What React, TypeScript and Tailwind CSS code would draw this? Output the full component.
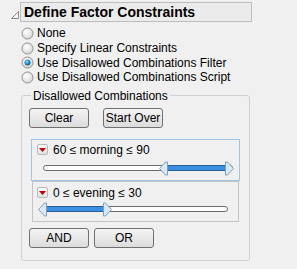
const font = { fontFamily: '"Liberation Sans", Arial, sans-serif' };

const Radio = ({ checked, label }: { checked?: boolean; label: string }) => (
  <div className="flex items-center h-[14.7px]">
    <svg width="13" height="13" viewBox="0 0 13 13" className="mr-[3px]">
      <defs>
        <radialGradient id={checked ? "rgOn" : "rgOff"} cx="40%" cy="35%" r="70%">
          <stop offset="0%" stopColor="#ffffff" />
          <stop offset="100%" stopColor="#d6d6d6" />
        </radialGradient>
        <radialGradient id="dot" cx="40%" cy="35%" r="65%">
          <stop offset="0%" stopColor="#8fd8f8" />
          <stop offset="60%" stopColor="#1f8ed0" />
          <stop offset="100%" stopColor="#12507e" />
        </radialGradient>
      </defs>
      <circle cx="6.5" cy="6.5" r="5.5" fill={`url(#${checked ? "rgOn" : "rgOff"})`} stroke="#8e8f8f" strokeWidth="1" />
      {checked && <circle cx="6.5" cy="6.5" r="3" fill="url(#dot)" />}
    </svg>
    <span className="text-[12px] text-black">{label}</span>
  </div>
);

const Btn = ({ label, w = "w-[60px]" }: { label: string; w?: string }) => (
  <button
    className={`${w} h-[20px] rounded-[3px] border border-[#707070] bg-gradient-to-b from-[#f4f4f4] to-[#dcdcdc] text-[12px] text-black`}
  >
    {label}
  </button>
);

const RedMenu = () => (
  <div className="w-[11px] h-[11px] rounded-[2px] border border-[#b8b8b8] bg-gradient-to-b from-[#fafafa] to-[#e2e2e2] flex items-center justify-center">
    <svg width="7" height="4" viewBox="0 0 7 4">
      <path d="M0 0 L7 0 L3.5 4 Z" fill="#c00000" />
    </svg>
  </div>
);

// range slider drawing: track from 0..w, selection lo..hi in px
const Slider = ({ w, lo, hi }: { w: number; lo: number; hi: number }) => (
  <svg width={w + 10} height="15" viewBox={`-5 0 ${w + 10} 15`}>
    <rect x="0.5" y="4.5" width={w - 1} height="5" rx="2.5" fill="#ffffff" stroke="#6d6d6d" />
    <rect x={lo} y="4.5" width={hi - lo} height="5" fill="#3b8fe2" stroke="#2b5f93" />
    <path
      d={`M${lo - 5.5} 7.5 L${lo + 0.5} 1 L${lo + 2.5} 1 L${lo + 2.5} 14 L${lo + 0.5} 14 Z`}
      fill="#dbe8f5"
      stroke="#7d9fc4"
    />
    <path
      d={`M${hi + 5.5} 7.5 L${hi - 0.5} 1 L${hi - 2.5} 1 L${hi - 2.5} 14 L${hi - 0.5} 14 Z`}
      fill="#dbe8f5"
      stroke="#7d9fc4"
    />
  </svg>
);

export default function App() {
  return (
    <div className="w-[297px] h-[269px] bg-[#f0f0f0] overflow-hidden" style={font}>
      {/* header */}
      <div className="flex items-center pt-[2px]">
        <svg width="20" height="20" viewBox="0 0 20 20">
          <path d="M11.5 16.5 L18.5 16.5 L18.5 9.5 Z" fill="#f7f7f7" stroke="#8a8a8a" />
        </svg>
        <div className="w-[232px] h-[20px] border border-[#bdbdbd] bg-[#ebebeb] flex items-center pl-[3px]">
          <span className="text-[14px] font-bold text-black leading-none">Define Factor Constraints</span>
        </div>
      </div>

      {/* radios */}
      <div className="pl-[21px] pt-[4px]">
        <Radio label="None" />
        <Radio label="Specify Linear Constraints" />
        <Radio checked label="Use Disallowed Combinations Filter" />
        <Radio label="Use Disallowed Combinations Script" />
      </div>

      {/* group */}
      <fieldset className="ml-[21px] mt-[4px] w-[229px] h-[172px] border border-[#d0d0d0] rounded-[3px] px-[7px] pt-[5px]">
        <legend className="ml-[2px] px-[2px] text-[12px] text-black leading-[14px]">Disallowed Combinations</legend>
        <div className="flex gap-[14px]">
          <Btn label="Clear" />
          <Btn label="Start Over" />
        </div>

        <div className="mt-[11px] ml-[2px] w-[209px] h-[42px] border border-[#9ec4e8] px-[5px] pt-[4px]">
          <div className="flex items-center gap-[5px] h-[12px]">
            <RedMenu />
            <span className="text-[12px] text-black">60 ≤ morning ≤ 90</span>
          </div>
          <div className="mt-[5px] ml-[1px]">
            <Slider w={190} lo={122} hi={185} />
          </div>
        </div>

        <div className="ml-[3px] w-[207px] h-[41px] border border-[#c3c3c3] px-[4px] pt-[5px]">
          <div className="flex items-center gap-[5px] h-[12px]">
            <RedMenu />
            <span className="text-[12px] text-black">0 ≤ evening ≤ 30</span>
          </div>
          <div className="mt-[3px] -ml-[1px]">
            <Slider w={187} lo={3} hi={65} />
          </div>
        </div>

        <div className="flex gap-[5px] mt-[6px]">
          <Btn label="AND" />
          <Btn label="OR" />
        </div>
      </fieldset>
    </div>
  );
}
